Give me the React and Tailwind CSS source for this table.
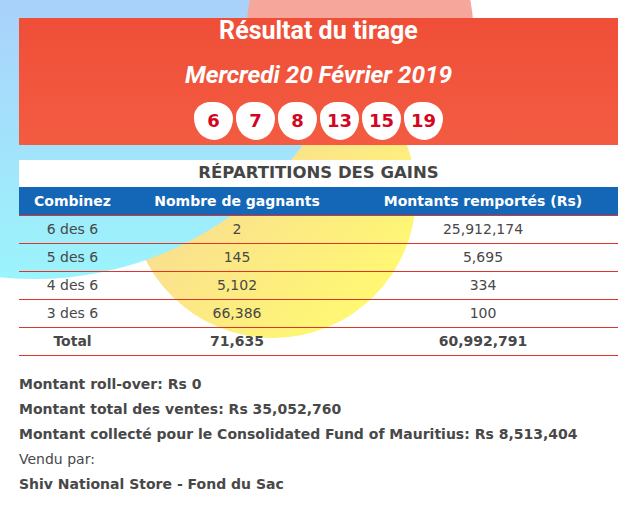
import React from 'react';

const rows = [
  ['6 des 6', '2', '25,912,174'],
  ['5 des 6', '145', '5,695'],
  ['4 des 6', '5,102', '334'],
  ['3 des 6', '66,386', '100'],
];

const balls = [6, 7, 8, 13, 15, 19];

const body = "font-['DejaVu_Sans',sans-serif]";

function Ball({ n }) {
  return (
    <div className="flex h-[38px] w-[39px] items-center justify-center rounded-[45%_50%_50%_55%/40%_45%_60%_60%] bg-white">
      <span className="text-[18px] leading-none font-bold text-[#d3061f]">{n}</span>
    </div>
  );
}

export default function App() {
  return (
    <div className={`relative h-[508px] w-full overflow-hidden bg-white ${body}`}>
      {/* decorative blobs behind the content */}
      <div className="absolute left-[130px] top-[52px] h-[286px] w-[286px] rounded-full bg-[linear-gradient(135deg,#f8d69a_20%,#fff873_85%)]" />
      <div className="absolute left-[-300px] top-[-391px] h-[670px] w-[670px] rounded-full bg-[linear-gradient(180deg,#adcafb_50%,#9bf4fc_100%)]" />
      <div className="absolute left-[247px] top-[-88px] h-[226px] w-[226px] rounded-full bg-[#f7a69b]" />

      <div className="relative px-[19px] pt-[18px]">
        <div className="flex flex-col items-center bg-gradient-to-b from-[#ef4e37] to-[#f35c42] pb-[5px] font-['Roboto',sans-serif] text-white">
          <h1 className="text-[25px] leading-[26px] font-bold">Résultat du tirage</h1>
          <p className="mt-[16px] text-[24.5px] leading-[30px] font-bold italic tracking-[-0.1px]">Mercredi 20 Février 2019</p>
          <div className={`mt-[12px] flex gap-[3px] ${body}`}>
            {balls.map((n) => (
              <Ball key={n} n={n} />
            ))}
          </div>
        </div>

        <div className="mt-[15px]">
          <div className="flex h-[27px] items-center justify-center bg-white text-[16.5px] font-bold text-[#454545]">
            RÉPARTITIONS DES GAINS
          </div>
          <div className="grid h-[29px] grid-cols-[107px_222px_1fr] items-center border-b border-[#e2332b] bg-[#1467b6] text-[14px] font-bold text-white">
            <div className="text-center">Combinez</div>
            <div className="text-center">Nombre de gagnants</div>
            <div className="text-center">Montants remportés (Rs)</div>
          </div>
          {rows.map((r) => (
            <div key={r[0]} className="grid h-[28px] grid-cols-[107px_222px_1fr] items-center border-b border-[#e2332b] text-[14px] text-[#484848]">
              <div className="text-center">{r[0]}</div>
              <div className="text-center">{r[1]}</div>
              <div className="text-center">{r[2]}</div>
            </div>
          ))}
          <div className="grid h-[28px] grid-cols-[107px_222px_1fr] items-center border-b border-[#e2332b] text-[14px] font-bold text-[#484848]">
            <div className="text-center">Total</div>
            <div className="text-center">71,635</div>
            <div className="text-center">60,992,791</div>
          </div>
        </div>

        <div className="mt-[16px] text-[14px] leading-[25px] text-[#484848]">
          <p className="font-bold">Montant roll-over: Rs 0</p>
          <p className="font-bold">Montant total des ventes: Rs 35,052,760</p>
          <p className="font-bold">Montant collecté pour le Consolidated Fund of Mauritius: Rs 8,513,404</p>
          <p>Vendu par:</p>
          <p className="font-bold">Shiv National Store - Fond du Sac</p>
        </div>
      </div>
    </div>
  );
}
